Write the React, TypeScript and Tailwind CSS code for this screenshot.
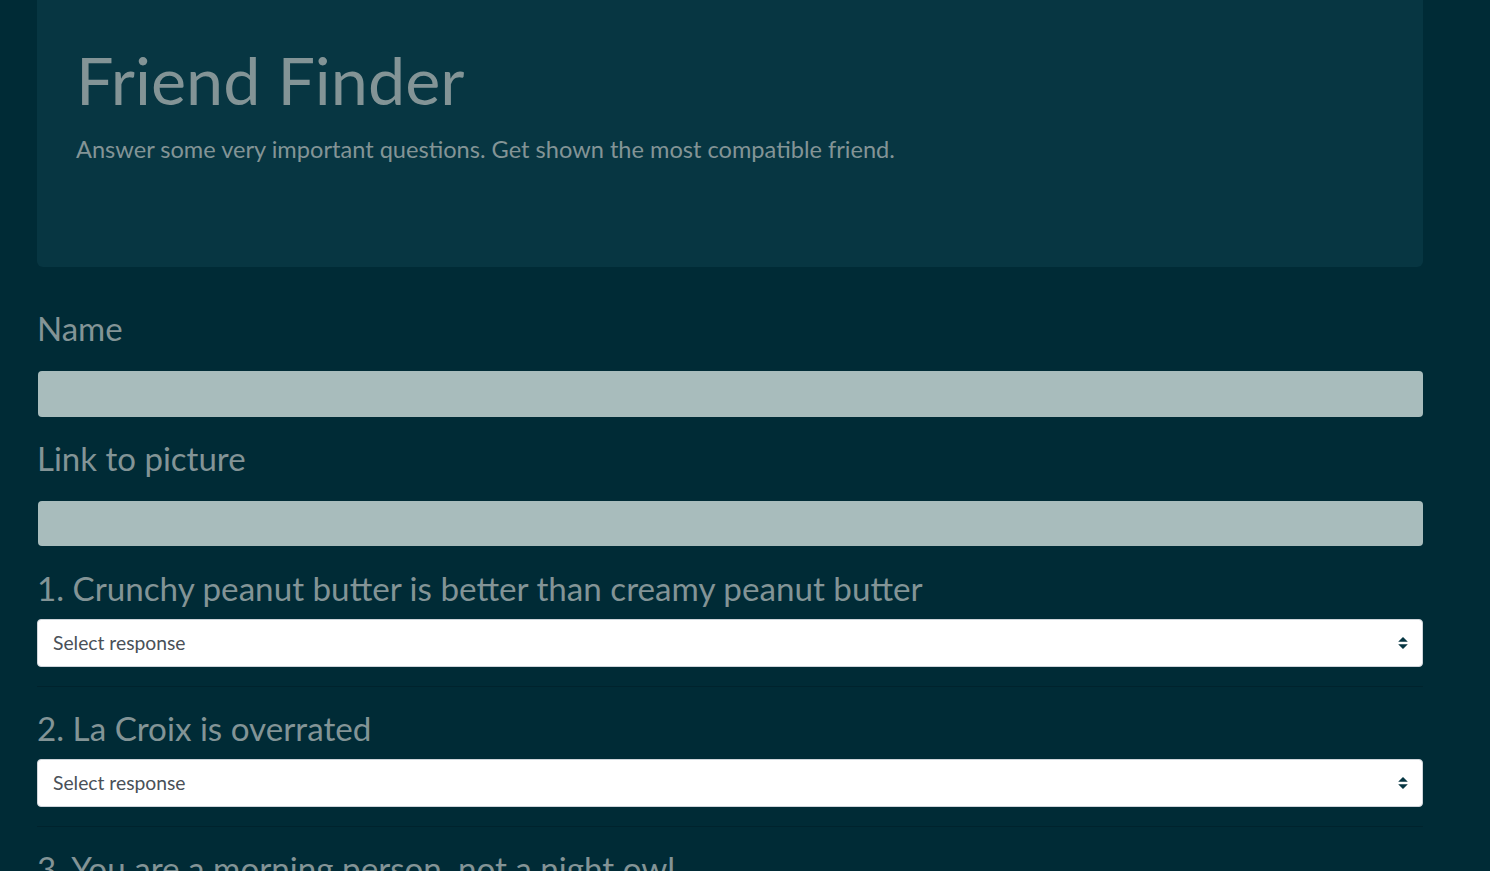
import { useState } from "react";

const questions = [
  "Crunchy peanut butter is better than creamy peanut butter",
  "La Croix is overrated",
  "You are a morning person, not a night owl",
];

function Arrows() {
  return (
    <svg
      className="pointer-events-none absolute right-[15px] top-1/2 h-[12px] w-[10px] -translate-y-1/2"
      viewBox="0 0 4 5"
    >
      <path fill="#073642" d="M2 0L0 2h4zm0 5L0 3h4z" />
    </svg>
  );
}

export default function App() {
  const [answers, setAnswers] = useState<string[]>(questions.map(() => ""));

  return (
    <div className="min-h-screen bg-[#002b36] font-['Lato',sans-serif] text-[#839496]">
      <div className="pl-[37px] pr-[67px]">
        <div className="h-[267px] rounded-b-[6px] bg-[#073642] pl-[39px] pt-[46px]">
          <h1 className="text-[66.5px] leading-none font-normal">Friend Finder</h1>
          <p className="mt-[25px] text-[23.6px] leading-none">
            Answer some very important questions. Get shown the most compatible friend.
          </p>
        </div>

        <form className="flex flex-col">
          <label className="mt-[45px] text-[33px] leading-none">Name</label>
          <input
            type="text"
            className="mt-[26px] ml-[1px] h-[46px] rounded-[4px] bg-[#a8bcbc] px-3 outline-none"
          />
          <label className="mt-[25px] text-[33px] leading-none">Link to picture</label>
          <input
            type="text"
            className="mt-[26px] ml-[1px] h-[45px] rounded-[4px] bg-[#a8bcbc] px-3 outline-none"
          />

          {questions.map((q, i) => (
            <div key={q} className={i === 0 ? "mt-[26px]" : "mt-[25px]"}>
              <label className="block text-[33.2px] leading-none">
                {i + 1}. {q}
              </label>
              <div className="relative mt-[14px]">
                <select
                  value={answers[i]}
                  onChange={(e) =>
                    setAnswers(answers.map((a, j) => (j === i ? e.target.value : a)))
                  }
                  className="h-[48px] w-full appearance-none rounded-[4px] border border-[#ced4da] bg-white pl-[15px] text-[19.3px] text-[#495057] outline-none"
                >
                  <option value="">Select response</option>
                  <option value="1">1 (Strongly Disagree)</option>
                  <option value="2">2</option>
                  <option value="3">3</option>
                  <option value="4">4</option>
                  <option value="5">5 (Strongly Agree)</option>
                </select>
                <Arrows />
              </div>
              <hr className="mt-[19px] border-t border-[#00232d]" />
            </div>
          ))}
        </form>
      </div>
    </div>
  );
}
